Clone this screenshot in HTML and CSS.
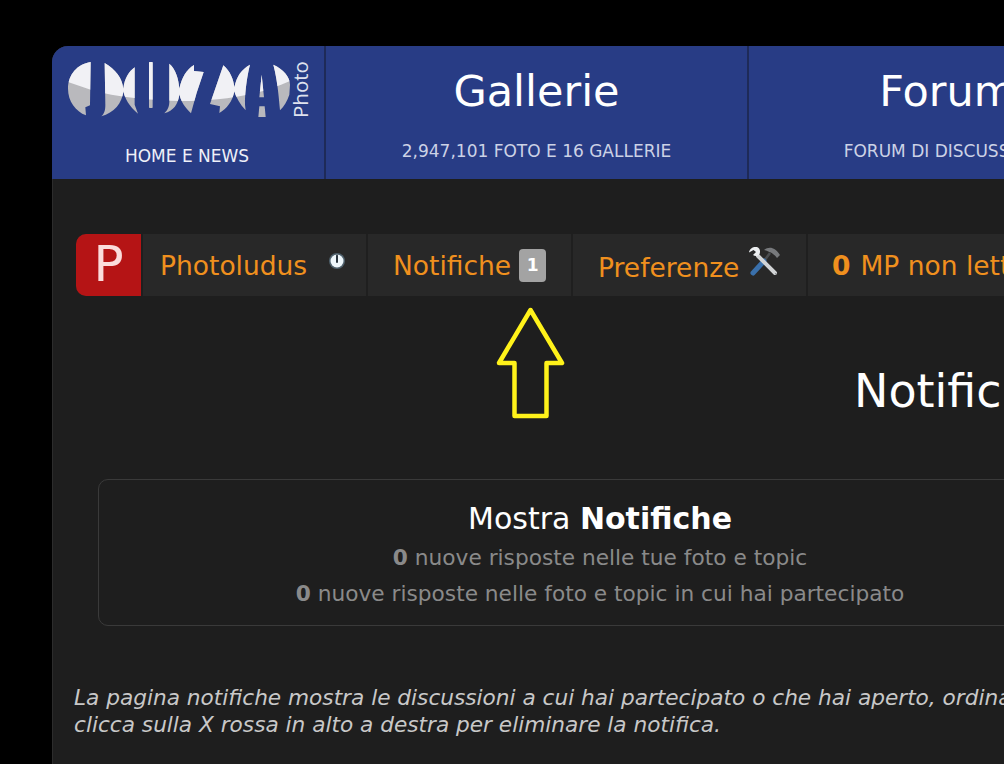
FILE: index.html
```html
<!DOCTYPE html>
<html lang="it">
<head>
  <meta charset="UTF-8" />
  <meta name="viewport" content="width=device-width, initial-scale=1.0"/>
  <title>Notifiche</title>
  <link rel="stylesheet" href="styles.css">
</head>
<body>
  <div class="page">
    <header class="topbar">
      <a class="top-cell logo-cell">
        <div class="logo">
          <svg class="logo-mark" viewBox="60 72 690 180" aria-hidden="true">
            <defs>
              <clipPath id="logoTop"><path d="M60 130 L84 138 L152 161 C230 185 330 192 430 195 C520 195 640 185 750 135 L770 120 L770 60 L60 60Z"/></clipPath>
              <g id="logoShapes">
                <path d="M152 78 C112 84 84 116 84 158 C84 196 107 226 138 238 L136 214 L150 208Z"/>
                <path d="M194 81 C227 101 247 126 250 158 C254 126 267 106 284 94 L284 206 L294 233 C267 211 254 186 250 166 C247 201 222 231 184 241 C194 231 196 221 196 206Z"/>
                <rect x="327" y="78" width="11" height="138" rx="2"/>
                <path d="M388 83 C408 100 416 130 418 158 C425 125 440 100 462 87 L462 105 L491 108 L470 170 L453 232 C435 215 422 195 418 175 C415 205 400 225 373 232 C385 220 388 210 388 195Z"/>
                <path d="M550 88 C570 105 581 130 583 154 C590 120 605 100 630 86 C622 115 614 170 615 206 L617 223 C600 205 588 185 583 166 C578 195 560 220 538 231 L540 211 L510 204Z"/>
                <path d="M665 116 L658 184 L672 184Z M658 211 L674 211 L677 243 L655 243Z"/>
                <path d="M700 86 C730 100 750 122 750 146 L748 176 C742 195 732 212 720 223 C716 180 712 130 700 86Z"/>
              </g>
            </defs>
            <use href="#logoShapes" fill="#b9b9bd"/>
            <g clip-path="url(#logoTop)"><use href="#logoShapes" fill="#f1f1f5"/></g>
          </svg>
          <span class="logo-photo">Photo</span>
        </div>
        <div class="top-sub top-sub-home">HOME E NEWS</div>
      </a>
      <a class="top-cell gallery-cell">
        <div class="top-title">Gallerie</div>
        <div class="top-sub">2,947,101 FOTO E 16 GALLERIE</div>
      </a>
      <a class="top-cell forum-cell">
        <div class="top-title">Forum</div>
        <div class="top-sub">FORUM DI DISCUSSIONE</div>
      </a>
    </header>

    <main class="content">
      <nav class="usernav">
        <a class="avatar">P</a>
        <a class="nav-item nav-user">Photoludus
          <svg class="icon-power" viewBox="0 0 16 16" aria-hidden="true">
            <circle cx="8" cy="8" r="8" fill="#6f8fa6" opacity=".55"/>
            <circle cx="8" cy="8" r="6.500" fill="#eef6fb"/>
            <path d="M8 2.500V9" stroke="#2b3640" stroke-width="2" stroke-linecap="round"/>
          </svg>
        </a>
        <a class="nav-item nav-notify">Notifiche <span class="badge">1</span></a>
        <a class="nav-item nav-prefs"><span class="prefs-label">Preferenze</span>
          <svg class="icon-tools" viewBox="0 0 40 40" aria-hidden="true">
            <path d="M20 19 L26 11" stroke="#4a4d50" stroke-width="2.500"/>
            <path d="M20 8 C25 4 31 5 36 13 L33 16 C30 12 27 10 20 8Z" fill="#77797c"/>
            <path d="M9 31 L20 19" stroke="#3a70ab" stroke-width="5" stroke-linecap="round"/>
            <path d="M14 14 L31 31" stroke="#d2d4d6" stroke-width="4" stroke-linecap="round"/>
            <path d="M31.500 31.500 L32 32" stroke="#55585b" stroke-width="1.500"/>
            <path d="M13 5 C9 4.500 5.500 6.500 5 10.500 L9.500 8 L12 10 L9 13 C12 15.500 16.500 13.500 16 9 C16 7.500 15 6 13 5Z" fill="#eceef0"/>
          </svg>
        </a>
        <a class="nav-item nav-mp"><b>0</b> MP non letti</a>
      </nav>

      <svg class="arrow" viewBox="0 0 70 112" aria-hidden="true">
        <path d="M34.500 3 L66 56 L50.500 56 L50.500 109 L18.500 109 L18.500 56 L3 56Z" fill="none" stroke="#fff21a" stroke-width="4.500" stroke-linejoin="round"/>
      </svg>

      <h1 class="page-title">Notifiche</h1>

      <section class="notify-box">
        <h2>Mostra <b>Notifiche</b></h2>
        <p><b>0</b> nuove risposte nelle tue foto e topic</p>
        <p><b>0</b> nuove risposte nelle foto e topic in cui hai partecipato</p>
      </section>

      <p class="note">La pagina notifiche mostra le discussioni a cui hai partecipato o che hai aperto, ordinate per data,<br>clicca sulla X rossa in alto a destra per eliminare la notifica.</p>
    </main>
  </div>
</body>
</html>
```

FILE: styles.css
```css
html, body {
  height: 100%;
}

body {
  margin: 0;
  background: #000;
  font-family: "DejaVu Sans", Verdana, sans-serif;
  overflow: hidden;
  padding: 46px 0 0 52px;
  box-sizing: border-box;
}

.page {
  width: 1100px;
  min-height: 800px;
  background: #1e1e1e;
  border-radius: 16px 16px 0 0;
  overflow: hidden;
  box-shadow: inset 1px 0 0 #2c2c2c;
}

.topbar {
  display: flex;
  height: 133px;
  background: #283c85;
  color: #fff;
}

.top-cell {
  display: block;
  text-align: center;
  box-sizing: border-box;
  border-right: 2px solid #1e2a58;
}

.logo-cell {
  width: 274px;
}

.gallery-cell {
  width: 423px;
}

.forum-cell {
  width: 397px;
  border-right: none;
}

.logo {
  display: flex;
  height: 78px;
  padding: 14px 0 0 8px;
  box-sizing: border-box;
}

.logo-mark {
  width: 230px;
  height: 60px;
  display: block;
}

.logo-photo {
  writing-mode: vertical-rl;
  transform: rotate(180deg);
  font-size: 20.500px;
  font-family: "Open Sans", sans-serif;
  color: #dfe2ee;
  height: 60px;
  line-height: 24px;
  margin: -2px 0 0 -2px;
  white-space: nowrap;
  text-align: left;
}

.top-title {
  font-size: 43px;
  line-height: 50px;
  margin-top: 20px;
}

.top-sub {
  font-size: 17px;
  line-height: 18px;
  color: #ccd2e6;
  margin-top: 26px;
}

.top-sub-home {
  margin-top: 23px;
  color: #eef0f8;
  padding-right: 2px;
}

.content {
  padding: 55px 0 0 24px;
  position: relative;
}

.usernav {
  display: flex;
  height: 62px;
  background: #282828;
  color: #f0901e;
  font-size: 26.500px;
  width: 1060px;
  border-radius: 10px 0 0 10px;
}

.avatar {
  width: 65px;
  background: #b51415;
  color: #fbdcdc;
  font-size: 50px;
  line-height: 60px;
  text-align: center;
  border-radius: 10px 0 0 10px;
}

.nav-item {
  display: flex;
  align-items: center;
  box-sizing: border-box;
  padding-left: 25px;
  border-left: 2px solid #1f1f1f;
  white-space: nowrap;
}

.nav-user {
  width: 225px;
  padding-left: 17px;
}

.nav-notify {
  width: 205px;
}

.nav-prefs {
  width: 235px;
}

.nav-mp {
  padding-left: 24px;
}

.prefs-label {
  margin-top: 4px;
}

.nav-mp b {
  margin-right: 10px;
}

.icon-power {
  width: 16px;
  height: 16px;
  margin: -8px 0 0 22px;
}

.icon-tools {
  width: 40px;
  height: 40px;
  margin: -6px 0 0 5px;
}

.badge {
  width: 27px;
  height: 33px;
  margin-left: 8px;
  background: #a3a3a3;
  color: #fff;
  border-radius: 4px;
  font-size: 17px;
  font-weight: bold;
  line-height: 33px;
  text-align: center;
}

.arrow {
  position: absolute;
  left: 444px;
  top: 128px;
  width: 70px;
  height: 112px;
}

.page-title {
  margin: 65px 0 0 778px;
  font-size: 46px;
  font-weight: normal;
  line-height: 60px;
  color: #fff;
  white-space: nowrap;
}

.notify-box {
  margin: 58px 0 0 22px;
  width: 1004px;
  height: 147px;
  box-sizing: border-box;
  border: 1px solid #3a3a3a;
  border-radius: 10px;
  text-align: center;
  padding-top: 19px;
}

.notify-box h2 {
  margin: 0 0 1px;
  font-size: 30px;
  font-weight: normal;
  line-height: 40px;
  color: #fff;
}

.notify-box p {
  margin: 0;
  font-size: 21.700px;
  line-height: 36px;
  color: #8a8a8a;
}

.note {
  margin: 58px 0 0 -2px;
  font-size: 21.650px;
  line-height: 27px;
  font-style: italic;
  color: #c8c8c8;
  white-space: nowrap;
}
```
